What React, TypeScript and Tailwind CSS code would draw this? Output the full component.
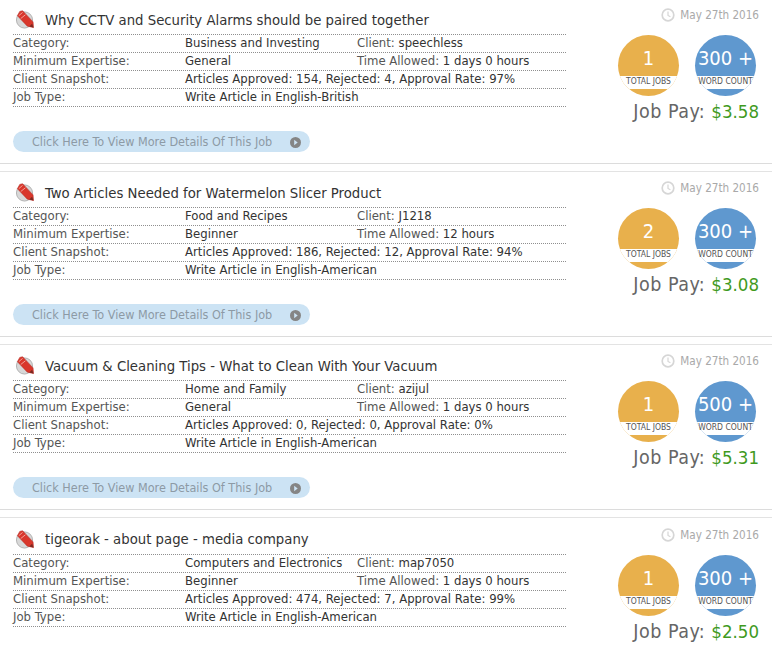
const F = "font-['DejaVu_Sans_Condensed','DejaVu_Sans',sans-serif] [font-stretch:condensed]";

const jobs = [
  { title: "Why CCTV and Security Alarms should be paired together", cat: "Business and Investing", client: "speechless", exp: "General", time: "1 days 0 hours", snap: "Articles Approved: 154, Rejected: 4, Approval Rate: 97%", type: "Write Article in English-British", total: "1", words: "300 +", pay: "$3.58" },
  { title: "Two Articles Needed for Watermelon Slicer Product", cat: "Food and Recipes", client: "J1218", exp: "Beginner", time: "12 hours", snap: "Articles Approved: 186, Rejected: 12, Approval Rate: 94%", type: "Write Article in English-American", total: "2", words: "300 +", pay: "$3.08" },
  { title: "Vacuum & Cleaning Tips - What to Clean With Your Vacuum", cat: "Home and Family", client: "azijul", exp: "General", time: "1 days 0 hours", snap: "Articles Approved: 0, Rejected: 0, Approval Rate: 0%", type: "Write Article in English-American", total: "1", words: "500 +", pay: "$5.31" },
  { title: "tigeorak - about page - media company", cat: "Computers and Electronics", client: "map7050", exp: "Beginner", time: "1 days 0 hours", snap: "Articles Approved: 474, Rejected: 7, Approval Rate: 99%", type: "Write Article in English-American", total: "1", words: "300 +", pay: "$2.50" },
];

function Pencil() {
  return (
    <svg width="19" height="19" viewBox="0 0 20 20" className="shrink-0">
      <circle cx="10" cy="10.5" r="8.5" fill="#d8d8d8" stroke="#b0b0b0" />
      <path d="M5 1.5 L8 0.8 L19 12.5 L19.5 18.5 L13 17 L2.5 6 Z" fill="#d9372c" stroke="#b42a22" strokeWidth="0.6" />
      <path d="M4 6 L8 2.5 M6 9 L11 5" stroke="#f3a49c" strokeWidth="1" />
      <path d="M15 17.3 L18 14.5 L19.5 18.5 Z" fill="#7a2a22" />
    </svg>
  );
}

function Clock() {
  return (
    <svg width="14" height="14" viewBox="0 0 14 14" fill="none" stroke="#d6d6d6" strokeWidth="1.7">
      <circle cx="7" cy="7" r="5.8" />
      <path d="M7 3.5 V7.4 L9.4 8.8" strokeWidth="1.2" />
    </svg>
  );
}

function Row({ label, value, extraLabel, extraValue }: { label: string; value: string; extraLabel?: string; extraValue?: string }) {
  return (
    <div className="flex h-[18px] items-center border-b border-dotted border-[#8f8f8f] pb-[2px] text-[13px] leading-[15px]">
      <div className="w-[172px] text-[#555]">{label}</div>
      {extraLabel ? (
        <>
          <div className="w-[172px] text-[#333]">{value}</div>
          <div className="text-[#555]">{extraLabel} <span className="text-[#333]">{extraValue}</span></div>
        </>
      ) : (
        <div className="text-[#333]">{value}</div>
      )}
    </div>
  );
}

function Badge({ value, label, color }: { value: string; label: string; color: string }) {
  return (
    <div className="relative h-[61px] w-[61px]">
      <div className={`flex h-full w-full flex-col items-center overflow-hidden rounded-full ${color}`}>
        <div className="h-[41px] pt-[10px] text-[20px] leading-[26px] whitespace-nowrap text-white">{value}</div>
        <div className="h-[13px] w-full bg-white" />
      </div>
      <div className="absolute top-[41px] left-0 w-full text-center text-[8.5px] leading-[10px] whitespace-nowrap text-[#555]">{label}</div>
    </div>
  );
}

function Card({ job }: { job: (typeof jobs)[number] }) {
  return (
    <div className="h-[173.2px] shrink-0">
      <div className="flex h-[164px] border-b border-[#dcdcdc] pl-[13px]">
        <div className="w-[553px] shrink-0">
          <div className="flex h-[35px] items-center border-b border-dotted border-[#8f8f8f] pt-[5px] pl-[2px]">
            <Pencil />
            <div className="ml-[11px] text-[14.75px] leading-[20px] text-[#333]">{job.title}</div>
          </div>
          <Row label="Category:" value={job.cat} extraLabel="Client:" extraValue={job.client} />
          <Row label="Minimum Expertise:" value={job.exp} extraLabel="Time Allowed:" extraValue={job.time} />
          <Row label="Client Snapshot:" value={job.snap} />
          <Row label="Job Type:" value={job.type} />
          <div className="mt-[24px] flex h-[21px] w-[297px] items-center justify-between rounded-full bg-[#cce3f4] pt-px pr-[9px] pl-[19px] text-[12.5px] text-[#8d9aa5]">
            <span>Click Here To View More Details Of This Job</span>
            <svg width="11" height="11" viewBox="0 0 10 10"><circle cx="5" cy="5" r="5" fill="#858585" /><path d="M3.8 2.6 L7 5 L3.8 7.4 Z" fill="#cce3f4" /></svg>
          </div>
        </div>
        <div className="flex flex-1 flex-col items-end pr-[13px]">
          <div className="flex h-[35px] items-start gap-[5px] pt-[8px] text-[11.6px] leading-[15px] text-[#a9a9a9]">
            <Clock />
            <span>May 27th 2016</span>
          </div>
          <div className="flex gap-[16px] pr-[3px]">
            <Badge value={job.total} label="TOTAL JOBS" color="bg-[#e8b04c]" />
            <Badge value={job.words} label="WORD COUNT" color="bg-[#5f98cf]" />
          </div>
          <div className="mt-[3px] text-[19.5px] leading-[26px] tracking-[0.5px] text-[#666]">
            Job Pay: <span className="text-[18.5px] tracking-normal text-[#3f9a1e]">{job.pay}</span>
          </div>
        </div>
      </div>
      <div className="mt-[7px] h-px bg-[#e3e3e3]" />
    </div>
  );
}

export default function App() {
  return (
    <div className={`flex h-[651px] w-[772px] flex-col overflow-hidden bg-white ${F}`}>
      {jobs.map((j) => (
        <Card key={j.title} job={j} />
      ))}
    </div>
  );
}
